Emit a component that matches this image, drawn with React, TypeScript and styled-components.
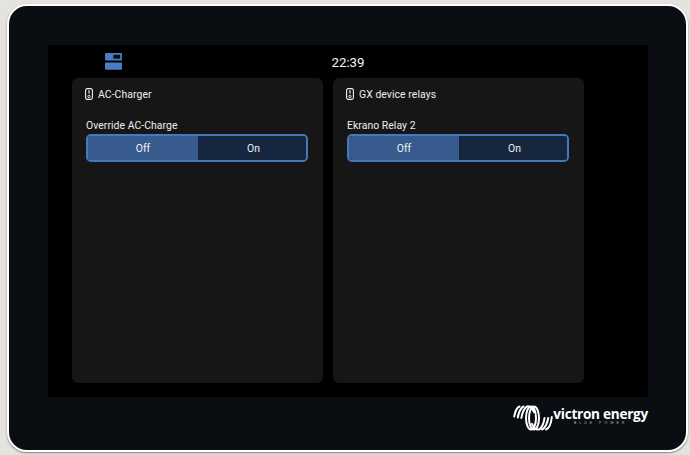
import React from "react";
import styled, { createGlobalStyle } from "styled-components";

const Global = createGlobalStyle`
  html, body { margin: 0; padding: 0; width: 690px; height: 455px; overflow: hidden; background: #e4e3de; }
  #root { width: 690px; height: 455px; }
  * { box-sizing: border-box; }
`;

const Page = styled.div`
  width: 690px;
  height: 455px;
  padding: 4px 2px 3px 7px;
  font-family: Roboto, "Liberation Sans", sans-serif;
`;

const Bezel = styled.div`
  width: 681px;
  height: 448px;
  padding: 39px 37px 0 39px;
  background: #0a0d11;
  border: 2px solid #fff;
  border-radius: 20px;
  box-shadow: 0 1px 2px rgba(0, 0, 0, 0.45);
  display: flex;
  flex-direction: column;
`;

const Screen = styled.div`
  width: 600px;
  height: 352px;
  background: #000;
  padding: 0 24px;
  display: flex;
  flex-direction: column;
`;

const StatusBar = styled.div`
  height: 33px;
  flex: none;
  display: grid;
  grid-template-columns: 1fr auto 1fr;
  align-items: center;
  color: #f4f4f4;
  font-size: 13.3px;
`;

const StatusLeft = styled.div`
  display: flex;
  padding-left: 33px;
`;

const Clock = styled.div`
  padding-top: 1px;
`;

const Cards = styled.div`
  display: flex;
  gap: 10px;
  width: 512px;
`;

const Card = styled.section`
  width: 251px;
  height: 305px;
  background: #161616;
  border-radius: 6px;
  padding: 9px 14px 0;
`;

const CardHeader = styled.header`
  height: 14px;
  margin: 0 0 18px -1px;
  display: flex;
  align-items: center;
  gap: 5px;
  color: #eeeeee;
  font-size: 10.4px;
  letter-spacing: 0.08px;
`;

const ControlLabel = styled.div`
  height: 14px;
  color: #eeeeee;
  font-size: 10.4px;
  line-height: 14px;
  letter-spacing: 0.06px;
  margin-bottom: 1px;
`;

const Toggle = styled.div`
  width: 222px;
  height: 28px;
  display: flex;
  border: 2px solid #4478c0;
  border-radius: 5px;
  overflow: hidden;
`;

const Segment = styled.div<{ $active?: boolean }>`
  flex: ${(p) => (p.$active ? "0 0 110px" : "1")};
  display: flex;
  align-items: center;
  justify-content: center;
  padding-left: ${(p) => (p.$active ? "0" : "3px")};
  color: #f2f2f2;
  font-size: 10.4px;
  background: ${(p) => (p.$active ? "#375b8c" : "#16263f")};
`;

const BezelFooter = styled.div`
  display: flex;
  justify-content: flex-end;
  padding: 8px 1px 0 0;
`;

const Logo = styled.div`
  display: flex;
  align-items: flex-start;
  color: #fff;
`;

const LogoText = styled.div`
  display: flex;
  flex-direction: column;
  align-items: center;
  padding-top: 1px;
`;

const Brand = styled.div`
  font-family: "Open Sans", "Liberation Sans", sans-serif;
  font-size: 13.6px;
  font-weight: 700;
  line-height: 15px;
  letter-spacing: -0.27px;
  white-space: nowrap;
`;

const Tagline = styled.div`
  font-family: "Liberation Sans", sans-serif;
  font-size: 3.5px;
  line-height: 5px;
  letter-spacing: 3px;
  color: #b9bbbd;
`;

const DeviceIcon = () => (
  <svg width="8" height="12" viewBox="0 0 8 12" fill="none">
    <rect x="0.6" y="0.6" width="6.8" height="10.8" rx="1.6" stroke="#f0f0f0" strokeWidth="1.1" />
    <rect x="3.4" y="2.3" width="1.2" height="3.2" fill="#f0f0f0" />
    <circle cx="4" cy="8.4" r="1.2" stroke="#f0f0f0" strokeWidth="0.9" />
  </svg>
);

const PanelsIcon = () => (
  <svg width="17" height="17" viewBox="0 0 17 17">
    <rect x="0" y="0" width="17" height="7.4" rx="1" fill="#4a7cc3" />
    <rect x="8.4" y="1.8" width="6.8" height="3.8" fill="#06090f" />
    <rect x="0" y="9.6" width="17" height="7.2" rx="0.8" fill="#4a7cc3" />
  </svg>
);

const VictronMark = () => (
  <svg width="40" height="26" viewBox="0 0 40 26" fill="none" stroke="#fff" strokeLinecap="round" strokeWidth="2">
    <path d="M1.2 11.5 C2 7 4 2.5 6.5 1.5" />
    <path d="M4.8 12.5 C5.5 7.5 8 2.5 10.5 1.5" />
    <path d="M8.4 13 C9 8 11.5 2.5 14 1.5 C17 0.8 19 2.5 21 7" />
    <ellipse cx="18" cy="13" rx="5" ry="11.5" />
    <ellipse cx="21" cy="13" rx="5" ry="11.5" />
    <path d="M19 19 C21 23.5 23 25 26 24.5 C28.5 23.5 31 18 31.5 13" />
    <path d="M29 24.5 C32 23.5 34.5 18 35.2 13" />
    <path d="M33 24.5 C36 23.5 38.2 18 38.8 12" />
  </svg>
);

const cards = [
  { title: "AC-Charger", label: "Override AC-Charge" },
  { title: "GX device relays", label: "Ekrano Relay 2" },
];

export default function App() {
  return (
    <Page>
      <Global />
      <Bezel>
        <Screen>
          <StatusBar>
            <StatusLeft>
              <PanelsIcon />
            </StatusLeft>
            <Clock>22:39</Clock>
            <div />
          </StatusBar>
          <Cards>
            {cards.map((c) => (
              <Card key={c.title}>
                <CardHeader>
                  <DeviceIcon />
                  {c.title}
                </CardHeader>
                <ControlLabel>{c.label}</ControlLabel>
                <Toggle>
                  <Segment $active>Off</Segment>
                  <Segment>On</Segment>
                </Toggle>
              </Card>
            ))}
          </Cards>
        </Screen>
        <BezelFooter>
          <Logo>
            <VictronMark />
            <LogoText>
              <Brand>victron energy</Brand>
              <Tagline>BLUE POWER</Tagline>
            </LogoText>
          </Logo>
        </BezelFooter>
      </Bezel>
    </Page>
  );
}
